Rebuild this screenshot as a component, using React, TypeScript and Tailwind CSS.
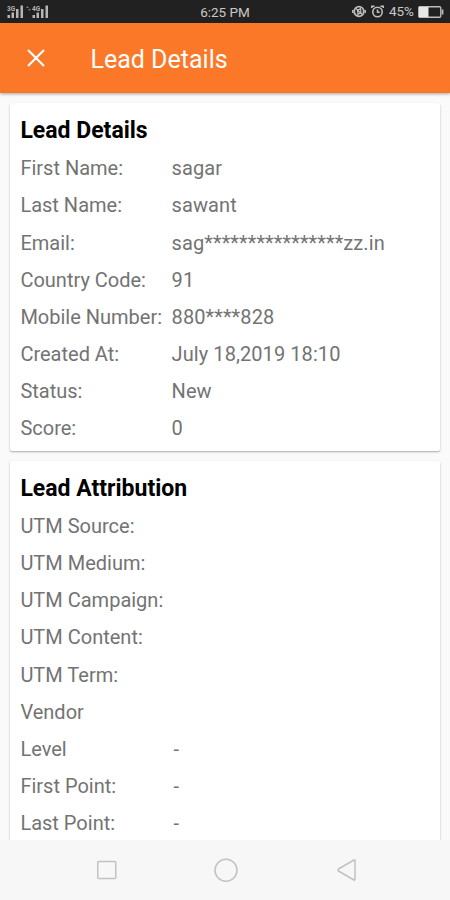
type Field = { label: string; value?: string }

const leadDetails: Field[] = [
  { label: "First Name:", value: "sagar" },
  { label: "Last Name:", value: "sawant" },
  { label: "Email:", value: "sag****************zz.in" },
  { label: "Country Code:", value: "91" },
  { label: "Mobile Number:", value: "880****828" },
  { label: "Created At:", value: "July 18,2019 18:10" },
  { label: "Status:", value: "New" },
  { label: "Score:", value: "0" },
]

const leadAttribution: Field[] = [
  { label: "UTM Source:" },
  { label: "UTM Medium:" },
  { label: "UTM Campaign:" },
  { label: "UTM Content:" },
  { label: "UTM Term:" },
  { label: "Vendor" },
  { label: "Level", value: "-" },
  { label: "First Point:", value: "-" },
  { label: "Last Point:", value: "-" },
]

function Signal({ label }: { label: string }) {
  return (
    <svg width="18" height="13" viewBox="0 0 18 13" fill="#b5b5b5">
      <text x="0" y="5.500" fontSize="6.500" fontWeight="700" fontFamily="Roboto, sans-serif">
        {label}
      </text>
      <rect x="0.500" y="10" width="2.500" height="3" />
      <rect x="4.500" y="7.500" width="2.500" height="5.500" />
      <rect x="9" y="4" width="2.500" height="9" />
      <rect x="13.500" y="0.500" width="2.500" height="12.500" />
    </svg>
  )
}

function StatusBar() {
  return (
    <div className="grid h-[23px] shrink-0 grid-cols-[1fr_auto_1fr] items-center bg-[#212121] text-[13.500px] leading-none text-[#c8c8c8]">
      <div className="flex items-center pl-[7px]">
        <Signal label="3G" />
        <svg width="7" height="13" viewBox="0 0 7 13" fill="#777">
          <path d="M1 3l1.500-2L4 3zM3 4h3L4.500 6z" />
        </svg>
        <Signal label="4G" />
      </div>
      <span className="pt-[2px]">6:25 PM</span>
      <div className="flex items-center justify-end pr-[6px]">
        {/* Vibrate */}
        <svg width="15" height="13" viewBox="0 0 15 13" fill="none" stroke="#bdbdbd">
          <circle cx="7" cy="6.500" r="4.800" strokeWidth="1.800" />
          <path d="M.8 5v3M13.200 5v3" strokeWidth="1.500" />
          <path d="M5.500 5.500l3-2 .5 4-3 2zM3.500 3l7 7" strokeWidth="1.200" />
        </svg>
        {/* Alarm */}
        <svg className="ml-[4px]" width="13" height="13" viewBox="0 0 13 13" fill="none" stroke="#bdbdbd" strokeWidth="1.600">
          <circle cx="6.500" cy="7" r="4.700" />
          <path d="M.8 3V1.200h2.800M12.200 3V1.200H9.400M6.500 4.500V7.200h2.200" />
        </svg>
        <span className="ml-[5px] pt-[1px]">45%</span>
        {/* Battery */}
        <svg className="ml-[4px]" width="26" height="12" viewBox="0 0 26 12" fill="none">
          <rect x=".75" y=".75" width="22" height="10.500" rx="1" stroke="#bdbdbd" strokeWidth="1.300" />
          <rect x="1" y="1" width="9.500" height="10" fill="#e8e8e8" />
          <path d="M24.500 3.500v5" stroke="#bdbdbd" strokeWidth="1.800" />
        </svg>
      </div>
    </div>
  )
}

function Card({ title, fields }: { title: string; fields: Field[] }) {
  return (
    <section className="shrink-0 rounded-[2px] bg-white px-[10px] pt-[8px] pb-[4px] shadow-[0_1px_2px_rgba(0,0,0,0.32)]">
      <h2 className="h-[38.500px] text-[23px] leading-[39.500px] font-bold text-black">{title}</h2>
      <dl>
        {fields.map(({ label, value }) => (
          <div key={label} className="flex h-[37.130px] items-center text-[20px] whitespace-nowrap text-[#737373]">
            <dt className="w-[151.200px] shrink-0">{label}</dt>
            <dd className={value === "-" ? "pl-[2px]" : "tracking-[0.080px]"}>{value}</dd>
          </div>
        ))}
      </dl>
    </section>
  )
}

export default function App() {
  return (
    <div className="flex h-[900px] w-[450px] flex-col overflow-hidden bg-[#fafafa] font-['Roboto',sans-serif]">
      <StatusBar />
      <header className="z-10 flex h-[70px] shrink-0 items-center bg-[#fb7829] pl-[26.500px] text-white shadow-[0_1px_3px_rgba(0,0,0,0.35)]">
        <svg width="18" height="18" viewBox="0 0 18 18" fill="none" stroke="currentColor" strokeWidth="2.200">
          <path d="M1 1l16 16M17 1L1 17" />
        </svg>
        <h1 className="ml-[46px] pt-[3px] text-[25px]">Lead Details</h1>
      </header>

      <main className="flex min-h-0 flex-1 flex-col gap-[10.300px] overflow-hidden pt-[10.200px] pr-[9.600px] pl-[10.400px]">
        <Card title="Lead Details" fields={leadDetails} />
        <Card title="Lead Attribution" fields={leadAttribution} />
      </main>

      {/* System navigation */}
      <nav className="z-10 flex h-[60px] shrink-0 items-center bg-[#f7f7f7] pl-[96px]">
        <svg width="22" height="24" viewBox="0 0 22 24" fill="none" stroke="#c2c2c2" strokeWidth="1.500">
          <rect x="1.750" y="3.500" width="18" height="17" rx="1" />
        </svg>
        <svg className="ml-[95.500px]" width="24" height="24" viewBox="0 0 24 24" fill="none" stroke="#c2c2c2" strokeWidth="1.500">
          <circle cx="12" cy="12.200" r="11" />
        </svg>
        <svg className="ml-[99px]" width="20" height="24" viewBox="0 0 20 24" fill="none" stroke="#c2c2c2" strokeWidth="1.500" strokeLinejoin="round">
          <path d="M18 2.500v19q0 1-1 .5L1.500 13q-1-1 0-2L17 2q1-.5 1 .5z" />
        </svg>
      </nav>
    </div>
  )
}
